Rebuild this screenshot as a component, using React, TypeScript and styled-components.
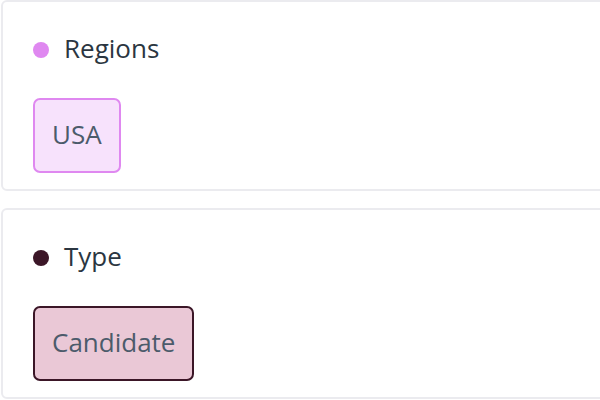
import styled, { createGlobalStyle } from "styled-components";

const GlobalStyle = createGlobalStyle`
  html, body {
    margin: 0;
    padding: 0;
    background: #ffffff;
    overflow: hidden;
  }
  body {
    font-family: "Open Sans", "Liberation Sans", sans-serif;
  }
`;

const Page = styled.div`
  display: flex;
  flex-direction: column;
  gap: 17px;
  width: 640px;
  padding-left: 1px;
`;

const Card = styled.section`
  display: flex;
  flex-direction: column;
  gap: 30px;
  height: 191px;
  box-sizing: border-box;
  padding: 30px 30px 0;
  border: 2px solid #ebebef;
  border-radius: 6px;
  background: #ffffff;
`;

const Heading = styled.div`
  display: flex;
  align-items: center;
  gap: 15px;
  height: 36px;
  font-size: 26px;
  color: #2b3641;
`;

const HeadingText = styled.span`
  padding-bottom: 4px;
`;

const Dot = styled.span<{ $color: string }>`
  width: 16px;
  height: 16px;
  border-radius: 50%;
  background: ${(p) => p.$color};
  flex-shrink: 0;
`;

const Chips = styled.div`
  display: flex;
  gap: 12px;
`;

const Chip = styled.span<{ $border: string; $bg: string }>`
  display: inline-flex;
  align-items: center;
  box-sizing: border-box;
  height: 75px;
  padding: 0 17px 3px;
  border: 2px solid ${(p) => p.$border};
  border-radius: 7px;
  background: ${(p) => p.$bg};
  font-size: 26px;
  color: #4c5b6b;
`;

const groups = [
  {
    title: "Regions",
    dot: "#df88f0",
    border: "#df88f0",
    bg: "#f7e2fc",
    items: ["USA"],
  },
  {
    title: "Type",
    dot: "#3b1627",
    border: "#3b1627",
    bg: "#eac8d6",
    items: ["Candidate"],
  },
];

export default function App() {
  return (
    <>
      <GlobalStyle />
      <Page>
        {groups.map((g) => (
          <Card key={g.title}>
            <Heading>
              <Dot $color={g.dot} />
              <HeadingText>{g.title}</HeadingText>
            </Heading>
            <Chips>
              {g.items.map((item) => (
                <Chip key={item} $border={g.border} $bg={g.bg}>
                  {item}
                </Chip>
              ))}
            </Chips>
          </Card>
        ))}
      </Page>
    </>
  );
}
